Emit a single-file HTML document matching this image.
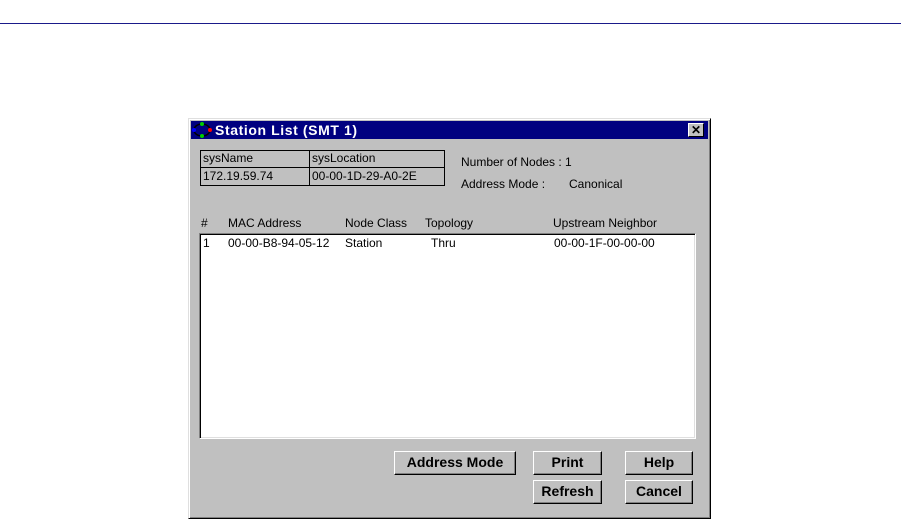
<!DOCTYPE html>
<html><head><style>
body{margin:0;width:901px;height:526px;background:#fff;position:relative;overflow:hidden;font-family:"Liberation Sans",Arial,sans-serif;}
.a{position:absolute}
.t{font-size:12px;color:#000;white-space:nowrap}
.btn{position:absolute;background:#c0c0c0;border:1px solid;border-color:#fff #000 #000 #fff;box-shadow:inset -1px -1px 0 #808080;font-weight:bold;font-size:14px;text-align:center;box-sizing:border-box;line-height:21px}
</style></head><body>
<div class="a" style="left:0;top:23px;width:901px;height:1px;background:#1a1a8a"></div>
<div class="a" style="left:188px;top:118px;width:523px;height:401px;background:#c0c0c0;box-sizing:border-box;border:1px solid;border-color:#dfdfdf #000 #000 #dfdfdf;box-shadow:inset 1px 1px 0 #fff,inset -1px -1px 0 #808080"></div>
<div class="a" style="left:191px;top:121px;width:517px;height:18px;background:#000080"></div>
<svg class="a" style="left:192px;top:121px" width="20" height="18"><ellipse cx="10" cy="9" rx="8" ry="6" fill="none" stroke="#000" stroke-width="1.5"/><circle cx="10" cy="3" r="2" fill="#0c0"/><circle cx="10" cy="15" r="2" fill="#0c0"/><circle cx="2" cy="9" r="2" fill="#00f"/><circle cx="18" cy="9" r="2" fill="#f00"/></svg>
<div class="a" style="left:215px;top:121px;color:#fff;font-weight:bold;font-size:14px;letter-spacing:0.6px;line-height:18px">Station List (SMT 1)</div>
<div class="a" style="left:688px;top:123px;width:16px;height:14px;background:#c0c0c0;box-sizing:border-box;border:1px solid;border-color:#fff #000 #000 #fff;font-size:12px;font-weight:bold;text-align:center;line-height:12px">✕</div>
<div class="a" style="left:200px;top:150px;width:245px;height:36px;border:1px solid #000;box-sizing:border-box"></div>
<div class="a" style="left:200px;top:167px;width:245px;height:1px;background:#000"></div>
<div class="a" style="left:309px;top:150px;width:1px;height:36px;background:#000"></div>
<div class="a t" style="left:203px;top:151px">sysName</div>
<div class="a t" style="left:312px;top:151px">sysLocation</div>
<div class="a t" style="left:203px;top:169px">172.19.59.74</div>
<div class="a t" style="left:312px;top:169px">00-00-1D-29-A0-2E</div>
<div class="a t" style="left:461px;top:155px">Number of Nodes : 1</div>
<div class="a t" style="left:461px;top:177px">Address Mode :</div>
<div class="a t" style="left:569px;top:177px">Canonical</div>
<div class="a t" style="left:201px;top:216px">#</div>
<div class="a t" style="left:228px;top:216px">MAC Address</div>
<div class="a t" style="left:345px;top:216px">Node Class</div>
<div class="a t" style="left:425px;top:216px">Topology</div>
<div class="a t" style="left:553px;top:216px">Upstream Neighbor</div>
<div class="a" style="left:199px;top:233px;width:497px;height:206px;background:#fff;box-sizing:border-box;border:1px solid;border-color:#808080 #fff #fff #808080;box-shadow:inset 1px 1px 0 #000,inset -1px -1px 0 #dfdfdf"></div>
<div class="a t" style="left:203px;top:236px">1</div>
<div class="a t" style="left:228px;top:236px">00-00-B8-94-05-12</div>
<div class="a t" style="left:345px;top:236px">Station</div>
<div class="a t" style="left:431px;top:236px">Thru</div>
<div class="a t" style="left:554px;top:236px">00-00-1F-00-00-00</div>
<div class="btn" style="left:394px;top:451px;width:122px;height:24px">Address Mode</div>
<div class="btn" style="left:533px;top:451px;width:69px;height:24px">Print</div>
<div class="btn" style="left:625px;top:451px;width:68px;height:24px">Help</div>
<div class="btn" style="left:533px;top:480px;width:69px;height:24px">Refresh</div>
<div class="btn" style="left:625px;top:480px;width:68px;height:24px">Cancel</div>
</body></html>
